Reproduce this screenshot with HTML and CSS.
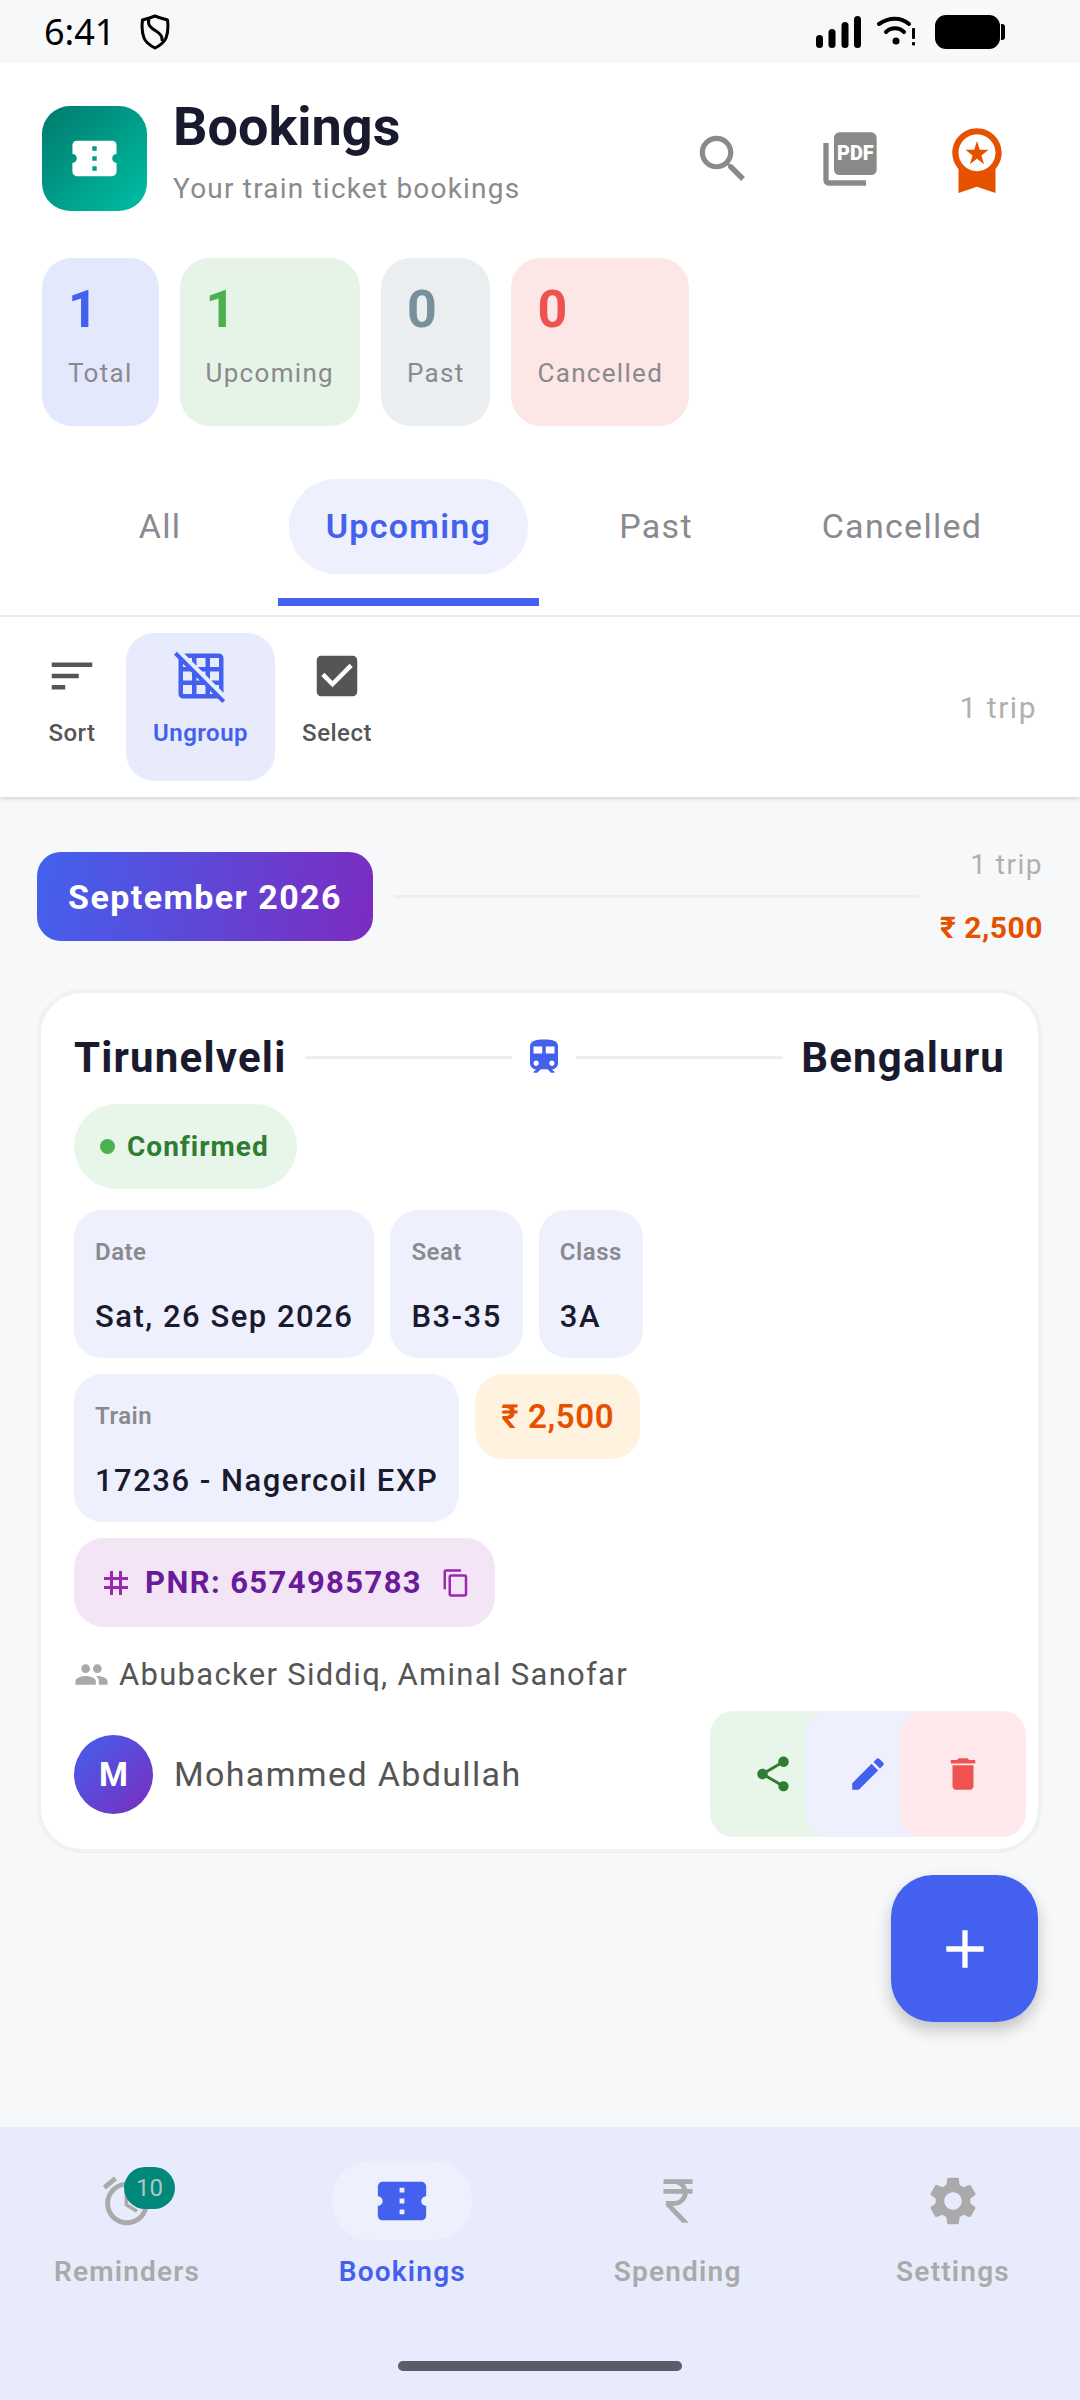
FILE: index.html
```html
<!DOCTYPE html>
<html lang="en">
<head>
  <meta charset="UTF-8">
  <meta name="viewport" content="width=device-width, initial-scale=1.0">
  <title>Bookings</title>
  <link rel="stylesheet" href="styles.css">
</head>
<body>
  <div class="status-bar">
    <span class="status-time">6:41</span>
    <svg class="status-shield" viewBox="0 0 30 36"><path d="M15 2 C10 4 6 5 2.500 6 C1.500 14 2 19 4 24 C6 29 11 32 15 34 C19 32 24 29 26 24 C28 19 28.500 14 27.500 6 C24 5 20 4 15 2Z" fill="none" stroke="#000" stroke-width="3" stroke-linejoin="round"/><path d="M9 5 C7 11 11 14 16 17 C21 20 23 23 22 27" fill="none" stroke="#000" stroke-width="3"/></svg>
    <div class="status-right">
      <svg class="status-signal" viewBox="0 0 45 32"><rect x="0" y="19" width="7" height="13" rx="3.500"/><rect x="12.500" y="13" width="7" height="19" rx="3.500"/><rect x="25.500" y="6" width="7" height="26" rx="3.500"/><rect x="38" y="0" width="7" height="32" rx="3.500"/></svg>
      <svg class="status-wifi" viewBox="0 0 38 30"><path d="M2 8 C12 1 24 1 32 8" fill="none" stroke="#000" stroke-width="4" stroke-linecap="round"/><path d="M9 16 C14 11 22 11 27 16" fill="none" stroke="#000" stroke-width="4" stroke-linecap="round"/><circle cx="19" cy="25" r="3.500"/><rect x="35" y="12" width="3" height="11" rx="1"/><rect x="35" y="26" width="3" height="3.500" rx="1"/></svg>
      <div class="status-battery"><span class="battery-body"></span><span class="battery-cap"></span></div>
    </div>
  </div>

  <header class="header">
    <div class="header-top">
      <div class="app-icon">
        <svg viewBox="0 0 24 24" class="icon-53"><path fill="#fff" d="M22 10V6c0-1.110-.9-2-2-2H4c-1.100 0-1.990.89-1.990 2v4c1.100 0 1.990.9 1.990 2s-.89 2-2 2v4c0 1.100.9 2 2 2h16c1.100 0 2-.9 2-2v-4c-1.100 0-2-.9-2-2s.9-2 2-2zm-9 7.500h-2v-2h2v2zm0-4.500h-2v-2h2v2zm0-4.500h-2v-2h2v2z"/></svg>
      </div>
      <div class="header-text">
        <h1 class="title">Bookings</h1>
        <p class="subtitle">Your train ticket bookings</p>
      </div>
      <div class="header-actions">
        <button class="head-btn">
          <svg viewBox="0 0 24 24" class="icon-62"><path fill="#8a8a8a" d="M15.500 14h-.79l-.28-.27C15.410 12.590 16 11.110 16 9.500 16 5.910 13.090 3 9.500 3S3 5.910 3 9.500 5.910 16 9.500 16c1.610 0 3.090-.59 4.230-1.570l.27.28v.79l5 4.990L20.490 19l-4.990-5zm-6 0C7.010 14 5 11.990 5 9.500S7.010 5 9.500 5 14 7.010 14 9.500 11.990 14 9.500 14z"/></svg>
        </button>
        <button class="head-btn">
          <svg viewBox="0 0 24 24" class="icon-64"><path fill="#8a8a8a" d="M4 6H2v14c0 1.100.9 2 2 2h14v-2H4V6z"/><rect x="6" y="2" width="16" height="16" rx="2" fill="#8a8a8a"/><text x="14" y="12.300" class="pdf-label">PDF</text></svg>
        </button>
        <button class="head-btn">
          <svg viewBox="0 0 24 24" class="icon-74"><path fill="#e65100" d="M9.680 13.690 12 11.930l2.310 1.760-.88-2.850L15.750 9h-2.840L12 6.190 11.090 9H8.250l2.310 1.840-.88 2.850zM20 10c0-4.420-3.580-8-8-8s-8 3.580-8 8c0 2.030.76 3.870 2 5.280V23l6-2 6 2v-7.720c1.240-1.410 2-3.250 2-5.280zm-8-6c3.310 0 6 2.690 6 6s-2.690 6-6 6-6-2.690-6-6 2.690-6 6-6z"/></svg>
        </button>
      </div>
    </div>

    <div class="stats">
      <div class="stat stat-total"><span class="stat-num">1</span><span class="stat-label">Total</span></div>
      <div class="stat stat-upcoming"><span class="stat-num">1</span><span class="stat-label">Upcoming</span></div>
      <div class="stat stat-past"><span class="stat-num">0</span><span class="stat-label">Past</span></div>
      <div class="stat stat-cancelled"><span class="stat-num">0</span><span class="stat-label">Cancelled</span></div>
    </div>

    <nav class="tabs">
      <div class="tab"><span class="tab-pill">All</span></div>
      <div class="tab tab-active"><span class="tab-pill">Upcoming</span><span class="tab-line"></span></div>
      <div class="tab"><span class="tab-pill">Past</span></div>
      <div class="tab"><span class="tab-pill">Cancelled</span></div>
    </nav>
  </header>

  <div class="toolbar">
    <div class="tool">
      <svg viewBox="0 0 24 24" class="icon-54"><path fill="#555" d="M3 18h6v-2H3v2zM3 6v2h18V6H3zm0 7h12v-2H3v2z"/></svg>
      <span>Sort</span>
    </div>
    <div class="tool tool-active">
      <svg viewBox="0 0 24 24" class="icon-54"><path fill="#4361ee" d="M8 4v1.450l2 2V4h4v4h-3.450l2 2H14v1.450l2 2V10h4v4h-3.450l2 2H20v1.450l2 2V4c0-1.100-.9-2-2-2H4.550l2 2H8zm8 0h4v4h-4V4zM1.270 1.270 0 2.550l2 2V20c0 1.100.9 2 2 2h15.460l2 2 1.270-1.270L1.270 1.270zM10 12.550 11.450 14H10v-1.450zm-6-6L5.450 8H4V6.550zM8 20H4v-4h4v4zm0-6H4v-4h3.450l.55.55V14zm6 6h-4v-4h3.450l.55.55V20zm2 0v-1.450L17.450 20H16z"/></svg>
      <span>Ungroup</span>
    </div>
    <div class="tool">
      <svg viewBox="0 0 24 24" class="icon-54"><path fill="#555" d="M19 3H5c-1.110 0-2 .9-2 2v14c0 1.100.89 2 2 2h14c1.110 0 2-.9 2-2V5c0-1.100-.89-2-2-2zm-9 14l-5-5 1.410-1.410L10 14.170l7.590-7.590L19 8l-9 9z"/></svg>
      <span>Select</span>
    </div>
    <span class="trip-count">1 trip</span>
  </div>

  <main class="content">
    <div class="month-row">
      <div class="month-pill">September 2026</div>
      <div class="month-line"></div>
      <div class="month-meta">
        <span class="month-trips">1 trip</span>
        <span class="month-total">₹ 2,500</span>
      </div>
    </div>

    <section class="card">
      <div class="route">
        <span class="city">Tirunelveli</span>
        <span class="route-line"></span>
        <svg viewBox="0 0 24 24" class="icon-train"><path fill="#4361ee" d="M12 2c-4 0-8 .5-8 4v9.500C4 17.430 5.570 19 7.500 19L6 20.500v.5h2.230l2-2H14l2 2h2v-.5L16.500 19c1.930 0 3.500-1.570 3.500-3.500V6c0-3.500-3.580-4-8-4zM7.500 17c-.83 0-1.500-.67-1.500-1.500S6.670 14 7.500 14s1.500.67 1.500 1.500S8.330 17 7.500 17zm3.500-7H6V6h5v4zm2 0V6h5v4h-5zm3.500 7c-.83 0-1.500-.67-1.500-1.500s.67-1.500 1.500-1.500 1.500.67 1.500 1.500-.67 1.500-1.500 1.500z"/></svg>
        <span class="route-line"></span>
        <span class="city">Bengaluru</span>
      </div>

      <div class="status-pill"><span class="status-dot"></span>Confirmed</div>

      <div class="tile-row">
        <div class="tile"><span class="tile-label">Date</span><span class="tile-value">Sat, 26 Sep 2026</span></div>
        <div class="tile"><span class="tile-label">Seat</span><span class="tile-value">B3-35</span></div>
        <div class="tile"><span class="tile-label">Class</span><span class="tile-value">3A</span></div>
      </div>
      <div class="tile-row">
        <div class="tile"><span class="tile-label">Train</span><span class="tile-value">17236 - Nagercoil EXP</span></div>
        <div class="price-tile">₹ 2,500</div>
      </div>
      <div class="pnr">
        <svg viewBox="0 0 24 24" class="icon-36"><path fill="#9c27b0" d="M20 10V8h-4V4h-2v4h-4V4H8v4H4v2h4v4H4v2h4v4h2v-4h4v4h2v-4h4v-2h-4v-4h4zm-6 4h-4v-4h4v4z"/></svg>
        <span class="pnr-text">PNR: 6574985783</span>
        <svg viewBox="0 0 24 24" class="icon-30"><path fill="#9c27b0" d="M16 1H4c-1.100 0-2 .9-2 2v14h2V3h12V1zm3 4H8c-1.100 0-2 .9-2 2v14c0 1.100.9 2 2 2h11c1.100 0 2-.9 2-2V7c0-1.100-.9-2-2-2zm0 16H8V7h11v14z"/></svg>
      </div>
      <div class="people">
        <svg viewBox="0 0 24 24" class="icon-35"><path fill="#aaa" d="M16 11c1.660 0 2.990-1.340 2.990-3S17.660 5 16 5c-1.660 0-3 1.340-3 3s1.340 3 3 3zm-8 0c1.660 0 2.990-1.340 2.990-3S9.660 5 8 5C6.340 5 5 6.340 5 8s1.340 3 3 3zm0 2c-2.330 0-7 1.170-7 3.500V19h14v-2.500c0-2.330-4.670-3.500-7-3.500zm8 0c-.29 0-.62.02-.97.05 1.160.84 1.970 1.970 1.970 3.450V19h6v-2.500c0-2.330-4.670-3.500-7-3.500z"/></svg>
        <span>Abubacker Siddiq, Aminal Sanofar</span>
      </div>
      <div class="card-foot">
        <div class="avatar">M</div>
        <span class="owner">Mohammed Abdullah</span>
        <div class="actions">
          <div class="action action-share"><svg viewBox="0 0 24 24" class="icon-42"><path fill="#2e7d32" d="M18 16.080c-.76 0-1.440.3-1.960.77L8.910 12.700c.05-.23.09-.46.09-.7s-.04-.47-.09-.7l7.050-4.110c.54.5 1.250.81 2.040.81 1.660 0 3-1.340 3-3s-1.340-3-3-3-3 1.340-3 3c0 .24.04.47.09.7L8.040 9.810C7.500 9.310 6.790 9 6 9c-1.660 0-3 1.340-3 3s1.340 3 3 3c.79 0 1.500-.31 2.040-.81l7.120 4.160c-.05.21-.08.43-.08.65 0 1.610 1.310 2.920 2.920 2.920 1.610 0 2.920-1.310 2.920-2.920s-1.310-2.920-2.920-2.920z"/></svg></div>
          <div class="action action-edit"><svg viewBox="0 0 24 24" class="icon-42"><path fill="#4361ee" d="M3 17.250V21h3.750L17.810 9.940l-3.750-3.750L3 17.250zM20.710 7.040c.39-.39.39-1.020 0-1.410l-2.340-2.340c-.39-.39-1.020-.39-1.410 0l-1.830 1.830 3.750 3.750 1.830-1.830z"/></svg></div>
          <div class="action action-delete"><svg viewBox="0 0 24 24" class="icon-42"><path fill="#ef5350" d="M6 19c0 1.100.9 2 2 2h8c1.100 0 2-.9 2-2V7H6v12zM19 4h-3.500l-1-1h-5l-1 1H5v2h14V4z"/></svg></div>
        </div>
      </div>
    </section>

    <button class="fab">
      <svg viewBox="0 0 24 24" class="icon-64"><path fill="#fff" d="M19 13h-6v6h-2v-6H5v-2h6V5h2v6h6v2z"/></svg>
    </button>
  </main>

  <footer class="bottom-nav">
    <div class="nav-items">
      <div class="nav-item">
        <div class="nav-icon">
          <svg viewBox="0 0 24 24" class="icon-58"><path fill="#aaa" d="M22 5.720l-4.600-3.860-1.290 1.530 4.600 3.860L22 5.720zM7.880 3.390L6.600 1.860 2 5.710l1.290 1.530 4.590-3.850zM12.500 8H11v6l4.750 2.850.75-1.230-4-2.370V8zM12 4c-4.970 0-9 4.030-9 9s4.030 9 9 9 9-4.030 9-9-4.030-9-9-9zm0 16c-3.870 0-7-3.130-7-7s3.130-7 7-7 7 3.130 7 7-3.130 7-7 7z"/></svg>
          <span class="badge">10</span>
        </div>
        <span class="nav-label">Reminders</span>
      </div>
      <div class="nav-item nav-active">
        <div class="nav-icon">
          <svg viewBox="0 0 24 24" class="icon-58"><path fill="#4361ee" d="M22 10V6c0-1.110-.9-2-2-2H4c-1.100 0-1.990.89-1.990 2v4c1.100 0 1.990.9 1.990 2s-.89 2-2 2v4c0 1.100.9 2 2 2h16c1.100 0 2-.9 2-2v-4c-1.100 0-2-.9-2-2s.9-2 2-2zm-9 7.500h-2v-2h2v2zm0-4.500h-2v-2h2v2zm0-4.500h-2v-2h2v2z"/></svg>
        </div>
        <span class="nav-label">Bookings</span>
      </div>
      <div class="nav-item">
        <div class="nav-icon">
          <svg viewBox="0 0 24 24" class="icon-58"><path fill="#aaa" d="M13.660 7C13.100 5.820 11.900 5 10.500 5L6 5V3h12v2l-3.260 0c.48.58.84 1.260 1.050 2L18 7v2l-2.020 0c-.25 2.800-2.610 5-5.480 5h-.73l6.730 7h-2.770L7 14v-2h3.500c1.760 0 3.220-1.300 3.460-3L6 9V7l7.660 0z"/></svg>
        </div>
        <span class="nav-label">Spending</span>
      </div>
      <div class="nav-item">
        <div class="nav-icon">
          <svg viewBox="0 0 24 24" class="icon-58"><path fill="#aaa" d="M19.140 12.940c.04-.3.06-.61.06-.94 0-.32-.02-.64-.07-.94l2.030-1.580c.18-.14.23-.41.12-.61l-1.920-3.320c-.12-.22-.37-.29-.59-.22l-2.390.96c-.5-.38-1.030-.7-1.620-.94l-.36-2.540c-.04-.24-.24-.41-.48-.41h-3.840c-.24 0-.43.17-.47.41l-.36 2.540c-.59.24-1.130.57-1.620.94l-2.390-.96c-.22-.08-.47 0-.59.22L2.740 8.870c-.12.21-.08.47.12.61l2.030 1.580c-.05.3-.09.63-.09.94s.02.64.07.94l-2.030 1.580c-.18.14-.23.41-.12.61l1.920 3.320c.12.22.37.29.59.22l2.390-.96c.5.38 1.030.7 1.620.94l.36 2.540c.05.24.24.41.48.41h3.840c.24 0 .44-.17.47-.41l.36-2.540c.59-.24 1.130-.56 1.620-.94l2.390.96c.22.08.47 0 .59-.22l1.920-3.320c.12-.22.07-.47-.12-.61l-2.010-1.580zM12 15.600c-1.980 0-3.600-1.620-3.600-3.600s1.620-3.600 3.600-3.600 3.600 1.620 3.600 3.600-1.620 3.600-3.600 3.600z"/></svg>
        </div>
        <span class="nav-label">Settings</span>
      </div>
    </div>
    <div class="home-bar"></div>
  </footer>
</body>
</html>
```

FILE: styles.css
```css
* {
  box-sizing: border-box;
}

body {
  margin: 0;
  width: 1080px;
  height: 2400px;
  overflow: hidden;
  display: flex;
  flex-direction: column;
  font-family: Roboto, sans-serif;
  background-color: #f7f8fa;
  color: #1a1a2e;
}

svg {
  display: block;
  flex: none;
}

button {
  border: none;
  background: none;
  padding: 0;
}

.icon-30 { width: 30px; height: 30px; }
.icon-35 { width: 35px; height: 35px; }
.icon-36 { width: 36px; height: 36px; }
.icon-42 { width: 42px; height: 42px; }
.icon-53 { width: 53px; height: 53px; }
.icon-54 { width: 54px; height: 54px; }
.icon-58 { width: 58px; height: 58px; }
.icon-62 { width: 62px; height: 62px; }
.icon-64 { width: 64px; height: 64px; }
.icon-74 { width: 74px; height: 74px; }

/* status bar */
.status-bar {
  height: 63px;
  padding: 0 75px 0 44px;
  display: flex;
  align-items: center;
  background-color: #f7f8fa;
}

.status-time {
  font-family: "Noto Sans", sans-serif;
  font-size: 36px;
  color: #000;
}

.status-shield {
  width: 30px;
  height: 36px;
  margin-left: 25px;
}

.status-right {
  margin-left: auto;
  display: flex;
  align-items: center;
  gap: 16px;
}

.status-signal {
  width: 45px;
  height: 32px;
}

.status-wifi {
  width: 38px;
  height: 30px;
  margin-top: -2px;
}

.status-battery {
  display: flex;
  align-items: center;
  gap: 1px;
  margin-left: 4px;
}

.battery-body {
  width: 65px;
  height: 34px;
  border-radius: 11px;
  background-color: #000;
}

.battery-cap {
  width: 4px;
  height: 16px;
  border-radius: 0 3px 3px 0;
  background-color: #000;
}

/* header */
.header {
  background-color: #fff;
  border-bottom: 2px solid #eeeeee;
  padding-bottom: 9px;
}

.header-top {
  height: 105px;
  margin-top: 43px;
  padding: 0 40px 0 42px;
  display: flex;
  align-items: center;
}

.app-icon {
  width: 105px;
  height: 105px;
  border-radius: 28px;
  background: linear-gradient(135deg, #00796b, #00bfa5);
  display: flex;
  align-items: center;
  justify-content: center;
}

.header-text {
  margin-left: 26px;
  padding-bottom: 13px;
}

.title {
  margin: 0;
  font-size: 54px;
  line-height: 60px;
  font-weight: 700;
}

.subtitle {
  margin: 14px 0 0;
  font-size: 28px;
  line-height: 36px;
  letter-spacing: 1.2px;
  color: #8a8a8e;
}

.header-actions {
  margin-left: auto;
  display: flex;
}

.head-btn {
  width: 127px;
  display: flex;
  align-items: center;
  justify-content: center;
}

.pdf-label {
  font-family: Roboto, sans-serif;
  font-size: 7.500px;
  font-weight: 900;
  text-anchor: middle;
  fill: #fff;
}

.stats {
  margin-top: 47px;
  padding: 0 42px;
  display: flex;
  gap: 21px;
}

.stat {
  height: 168px;
  padding: 25px 26px 0;
  border-radius: 30px;
  display: flex;
  flex-direction: column;
}

.stat-num {
  font-size: 52px;
  line-height: 54px;
  font-weight: 700;
}

.stat-label {
  margin-top: 21px;
  font-size: 26px;
  line-height: 30px;
  letter-spacing: 1.3px;
  color: #8a8a8e;
}

.stat-total { background-color: #e4e8fd; }
.stat-total .stat-num { color: #4361ee; }
.stat-upcoming { background-color: #e6f4e7; }
.stat-upcoming .stat-num { color: #4caf50; }
.stat-past { background-color: #ebeef1; }
.stat-past .stat-num { color: #78909c; }
.stat-cancelled { background-color: #fce6e6; }
.stat-cancelled .stat-num { color: #ef5350; }

.tabs {
  margin-top: 53px;
  padding-left: 42px;
  display: grid;
  grid-template-columns: 236px 261px 234px 258px;
  height: 127px;
}

.tab {
  display: flex;
  flex-direction: column;
  align-items: stretch;
  font-size: 34px;
  letter-spacing: 1.3px;
  color: #8a8a8e;
}

.tab-pill {
  height: 95px;
  padding-bottom: 2px;
  margin: 0 11px;
  border-radius: 48px;
  display: flex;
  align-items: center;
  justify-content: center;
}

.tab-active {
  font-weight: 600;
  color: #4361ee;
}

.tab-active .tab-pill {
  background-color: #eef0fd;
}

.tab-line {
  height: 8px;
  margin-top: 24px;
  background-color: #4361ee;
}

/* toolbar */
.toolbar {
  height: 180px;
  padding: 0 43px 0 18px;
  background-color: #fff;
  box-shadow: 0 2px 4px rgba(0, 0, 0, 0.14);
  display: flex;
  align-items: center;
  position: relative;
}

.tool {
  height: 148px;
  padding: 16px 27px 0;
  border-radius: 28px;
  display: flex;
  flex-direction: column;
  align-items: center;
  font-size: 24px;
  font-weight: 500;
  letter-spacing: 0.5px;
  color: #555;
}

.tool span {
  margin-top: 16px;
  line-height: 28px;
}

.tool-active {
  background-color: #e8ebfc;
  font-weight: 600;
  color: #4361ee;
}

.trip-count {
  margin-left: auto;
  font-size: 30px;
  letter-spacing: 1.5px;
  color: #b0b0b0;
}

/* content */
.content {
  flex: 1;
  position: relative;
}

.month-row {
  margin-top: 50px;
  padding: 0 37px;
  display: flex;
  align-items: center;
}

.month-pill {
  width: 336px;
  height: 89px;
  border-radius: 24px;
  background: linear-gradient(100deg, #4361ee, #7b2cbf);
  color: #fff;
  font-size: 34px;
  font-weight: 700;
  letter-spacing: 1.4px;
  display: flex;
  align-items: center;
  justify-content: center;
}

.month-line {
  flex: 1;
  height: 3px;
  margin: 0 21px;
  background-color: #eeeeee;
}

.month-meta {
  display: flex;
  flex-direction: column;
  align-items: flex-end;
  gap: 27px;
}

.month-trips {
  font-size: 28px;
  line-height: 36px;
  letter-spacing: 1.5px;
  color: #b0b0b0;
}

.month-total {
  font-size: 30px;
  line-height: 36px;
  font-weight: 700;
  letter-spacing: 0.5px;
  color: #e65100;
}

.card {
  width: 1005px;
  margin: 43px 0 0 37px;
  padding: 39px 12px 12px 33px;
  background-color: #fff;
  border: 4px solid #f0f1f2;
  border-radius: 45px;
}

.route {
  height: 50px;
  margin-right: 21px;
  display: flex;
  align-items: center;
  gap: 18px;
}

.city {
  font-size: 42px;
  font-weight: 700;
  letter-spacing: 1.2px;
}

.route-line {
  flex: 1;
  height: 3px;
  background-color: #eeeeee;
}

.icon-train {
  width: 42px;
  height: 42px;
  margin: 0 -7px;
}

.status-pill {
  width: max-content;
  height: 85px;
  margin-top: 22px;
  padding: 0 28px 0 26px;
  border-radius: 43px;
  background-color: #e8f5e9;
  color: #2e7d32;
  font-size: 28px;
  font-weight: 700;
  letter-spacing: 1px;
  display: flex;
  align-items: center;
}

.status-dot {
  width: 15px;
  height: 15px;
  margin-right: 12px;
  border-radius: 50%;
  background-color: #4caf50;
}

.tile-row {
  margin-top: 16px;
  display: flex;
  align-items: flex-start;
  gap: 16px;
}

.status-pill + .tile-row {
  margin-top: 21px;
}

.tile {
  height: 148px;
  padding: 24px 21px 0;
  border-radius: 28px;
  background-color: #eef0fd;
  display: flex;
  flex-direction: column;
}

.tile-label {
  font-size: 24px;
  line-height: 36px;
  font-weight: 600;
  letter-spacing: 0.5px;
  color: #8a8a8e;
}

.tile-value {
  margin-top: 27px;
  font-size: 31px;
  line-height: 40px;
  font-weight: 500;
  letter-spacing: 1.5px;
}

.price-tile {
  height: 85px;
  padding: 0 26px;
  border-radius: 28px;
  background-color: #fff3e0;
  color: #e65100;
  font-size: 33px;
  font-weight: 600;
  letter-spacing: 0.6px;
  display: flex;
  align-items: center;
}

.pnr {
  width: max-content;
  height: 89px;
  margin-top: 16px;
  padding: 0 24px 0 24px;
  border-radius: 30px;
  background-color: #f3e5f5;
  display: flex;
  align-items: center;
}

.pnr-text {
  margin: 0 19px 0 11px;
  font-size: 31px;
  font-weight: 700;
  letter-spacing: 1.4px;
  color: #6a1b9a;
}

.people {
  height: 36px;
  margin-top: 29px;
  display: flex;
  align-items: center;
  gap: 10px;
  font-size: 31px;
  letter-spacing: 1.3px;
  color: #555;
}

.card-foot {
  height: 126px;
  margin-top: 19px;
  display: flex;
  align-items: center;
}

.avatar {
  width: 79px;
  height: 79px;
  border-radius: 50%;
  background: linear-gradient(135deg, #4361ee, #7b2cbf);
  color: #fff;
  font-size: 33px;
  font-weight: 700;
  display: flex;
  align-items: center;
  justify-content: center;
}

.owner {
  margin-left: 21px;
  font-size: 34px;
  font-weight: 450;
  letter-spacing: 1.35px;
  color: #555;
}

.actions {
  margin-left: auto;
  display: flex;
}

.action {
  width: 126px;
  height: 126px;
  border-radius: 24px;
  display: flex;
  align-items: center;
  justify-content: center;
}

.action + .action {
  margin-left: -31px;
}

.action-share {
  background-color: #e8f5e9;
  border-radius: 24px 0 0 24px;
}

.action-edit {
  background-color: #eef0fd;
  border-radius: 24px 0 0 24px;
}

.action-delete { background-color: #ffe9ec; }

.fab {
  position: absolute;
  right: 42px;
  bottom: 105px;
  width: 147px;
  height: 147px;
  border-radius: 42px;
  background-color: #4361ee;
  box-shadow: 0 8px 16px rgba(0, 0, 0, 0.22);
  display: flex;
  align-items: center;
  justify-content: center;
}

/* bottom navigation */
.bottom-nav {
  height: 273px;
  background-color: #e8ebfc;
  display: flex;
  flex-direction: column;
  align-items: center;
}

.nav-items {
  width: 100%;
  margin-top: 34px;
  padding: 0 56px;
  display: flex;
  justify-content: space-between;
}

.nav-item {
  width: 142px;
  display: flex;
  flex-direction: column;
  align-items: center;
  font-size: 28px;
  font-weight: 600;
  letter-spacing: 1.2px;
  color: #aaa;
}

.nav-icon {
  width: 142px;
  height: 79px;
  border-radius: 40px;
  display: flex;
  align-items: center;
  justify-content: center;
  position: relative;
}

.nav-label {
  margin-top: 14px;
  line-height: 36px;
  white-space: nowrap;
}

.nav-active {
  color: #4361ee;
}

.nav-active .nav-icon {
  background-color: #eef0fd;
}

.badge {
  position: absolute;
  left: 68px;
  top: 6px;
  width: 51px;
  height: 42px;
  border-radius: 21px;
  background-color: #00897b;
  color: #b4c4c0;
  font-size: 24px;
  font-weight: 400;
  letter-spacing: 0;
  display: flex;
  align-items: center;
  justify-content: center;
}

.home-bar {
  width: 284px;
  height: 10px;
  margin-top: 71px;
  border-radius: 5px;
  background-color: #5c5c68;
}
```
